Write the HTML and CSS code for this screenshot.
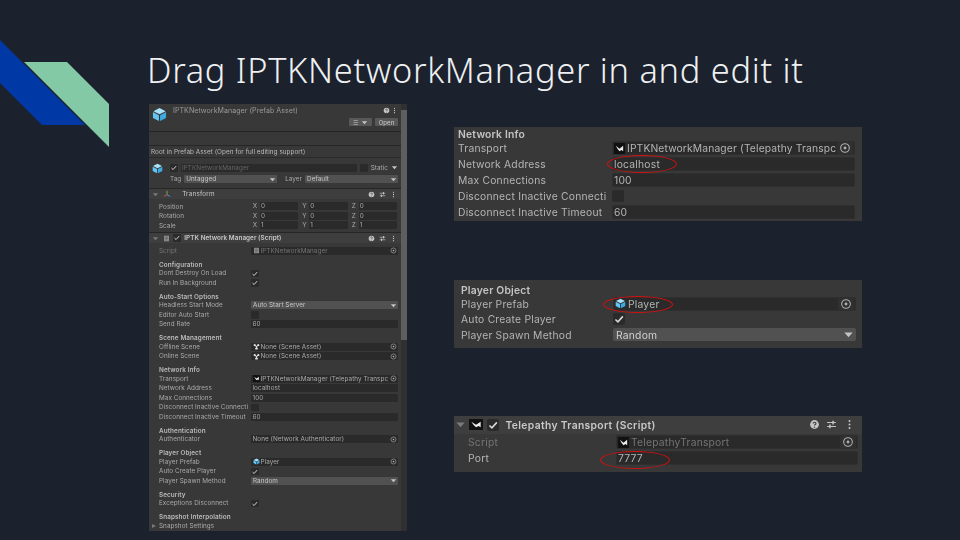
FILE: index.html
```html
<!DOCTYPE html>
<html lang="en">
<head>
<meta charset="utf-8">
<title>Drag IPTKNetworkManager in and edit it</title>
<link rel="stylesheet" href="styles.css">
</head>
<body>
<svg class="defs" width="0" height="0" aria-hidden="true">
  <defs>
    <symbol id="cube" viewBox="0 0 16 16">
      <path d="M8 1 14.5 4.4 8 7.8 1.5 4.4Z" fill="#a8e2fb"/>
      <path d="M1 5.4 7.4 8.8V15L1 11.7Z" fill="#62c5f2"/>
      <path d="M15 5.4 8.6 8.8V15L15 11.7Z" fill="#3fa9e0"/>
    </symbol>
    <symbol id="check" viewBox="0 0 10 10">
      <path d="M2 5.4 4.1 7.4 8.2 2.8" fill="none" stroke="#d8d8d8" stroke-width="1.3"/>
    </symbol>
    <symbol id="target" viewBox="0 0 10 10">
      <circle cx="5" cy="5" r="3.6" fill="none" stroke="#b0b0b0" stroke-width=".9"/>
      <circle cx="5" cy="5" r="1.2" fill="#b0b0b0"/>
    </symbol>
    <symbol id="help" viewBox="0 0 10 10">
      <circle cx="5" cy="5" r="4" fill="#c4c4c4"/>
      <path d="M3.7 4.1C3.8 2.6 6.4 2.7 6.3 4.1 6.3 5 5 5 5 6" fill="none" stroke="#383838" stroke-width="1"/>
      <circle cx="5" cy="7.4" r=".6" fill="#383838"/>
    </symbol>
    <symbol id="sliders" viewBox="0 0 10 10">
      <path d="M1 3.2H9M1 6.8H9" stroke="#c4c4c4"/>
      <path d="M6.4 1.5V4.9M3.6 5.1V8.5" stroke="#c4c4c4" stroke-width="1.4"/>
    </symbol>
    <symbol id="dots" viewBox="0 0 10 10">
      <circle cx="5" cy="1.8" r=".9" fill="#c4c4c4"/>
      <circle cx="5" cy="5" r=".9" fill="#c4c4c4"/>
      <circle cx="5" cy="8.2" r=".9" fill="#c4c4c4"/>
    </symbol>
    <symbol id="mirror" viewBox="0 0 12 12" preserveAspectRatio="none">
      <rect width="12" height="12" fill="#111"/>
      <path d="M2 3 6 6.2 10 3V9L8.2 7.6 6 9 3.8 6.2Z" fill="#eee"/>
    </symbol>
    <symbol id="scene" viewBox="0 0 10 10">
      <path d="M5 5 .8 4C.6 2.4 1.6 1 3 .9ZM5 5 9.2 4C9.4 2.4 8.4 1 7 .9ZM5 5 2.6 8.6C3.8 9.6 6.2 9.6 7.4 8.6Z" fill="#ddd"/>
      <circle cx="5" cy="5" r="1.2" fill="#ddd"/>
    </symbol>
    <symbol id="script" viewBox="0 0 10 10">
      <path d="M1.5 1H8.5V9H1.5Z" fill="#8f8f8f"/>
      <path d="M3 3H7M3 5H7M3 7H6" stroke="#444" stroke-width=".7"/>
    </symbol>
    <symbol id="arrow" viewBox="0 0 8 8">
      <path d="M1 2.5H7L4 6Z" fill="#c4c4c4"/>
    </symbol>
  </defs>
</svg>

<main class="slide">
  <svg class="decor" viewBox="0 0 110 148" width="110" height="148" aria-hidden="true">
    <polygon points="0,40 85,125 42,125 0,83" fill="#0039a6"/>
    <polygon points="24,62 67,62 109,104 109,147" fill="#84c9a6"/>
  </svg>

  <h1 class="title">Drag IPTKNetworkManager in and edit it</h1>

  <div class="content">
    <section class="inspector">
      <div class="insp-main">
        <div class="asset-head">
          <svg class="asset-cube"><use href="#cube"/></svg>
          <div class="asset-body">
            <div class="asset-title">
              <span class="grow">IPTKNetworkManager (Prefab Asset)</span>
              <svg class="ic"><use href="#help"/></svg>
              <svg class="ic"><use href="#dots"/></svg>
            </div>
            <div class="asset-tools">
              <span class="mini-btn">☰ <svg class="ic"><use href="#arrow"/></svg></span>
              <span class="mini-btn">Open</span>
            </div>
          </div>
        </div>
        <div class="empty-band"></div>
        <div class="root-note">Root in Prefab Asset (Open for full editing support)</div>

        <div class="object">
          <svg class="obj-cube"><use href="#cube"/></svg>
          <div class="obj-body">
            <div class="obj-row">
              <span class="box on"><svg><use href="#check"/></svg></span>
              <span class="field grow dim">IPTKNetworkManager</span>
              <span class="box"></span>
              <span>Static</span>
              <svg class="ic"><use href="#arrow"/></svg>
            </div>
            <div class="obj-row">
              <span>Tag</span>
              <span class="drop grow">Untagged<svg class="ic"><use href="#arrow"/></svg></span>
              <span class="layer">Layer</span>
              <span class="drop grow">Default<svg class="ic"><use href="#arrow"/></svg></span>
            </div>
          </div>
        </div>

        <div class="comp-head">
          <svg class="ic fold"><use href="#arrow"/></svg>
          <svg class="ic gizmo" viewBox="0 0 10 10"><path d="M5 1V6" stroke="#6fb33f" stroke-width="1.2"/><path d="M5 6 9 8" stroke="#4a8be0" stroke-width="1.2"/><path d="M5 6 1 8" stroke="#e05040" stroke-width="1.2"/></svg>
          <span class="comp-name plain">Transform</span>
          <svg class="ic"><use href="#help"/></svg>
          <svg class="ic"><use href="#sliders"/></svg>
          <svg class="ic"><use href="#dots"/></svg>
        </div>
        <div class="xform">
          <div class="row"><span class="lbl">Position</span><span class="vec"><i>X</i><b>0</b><i>Y</i><b>0</b><i>Z</i><b>0</b></span></div>
          <div class="row"><span class="lbl">Rotation</span><span class="vec"><i>X</i><b>0</b><i>Y</i><b>0</b><i>Z</i><b>0</b></span></div>
          <div class="row"><span class="lbl">Scale</span><span class="vec"><i>X</i><b>1</b><i>Y</i><b>1</b><i>Z</i><b>1</b></span></div>
        </div>

        <div class="comp-head">
          <svg class="ic fold"><use href="#arrow"/></svg>
          <svg class="ic"><use href="#script"/></svg>
          <span class="box on"><svg><use href="#check"/></svg></span>
          <span class="comp-name">IPTK Network Manager (Script)</span>
          <svg class="ic"><use href="#help"/></svg>
          <svg class="ic"><use href="#sliders"/></svg>
          <svg class="ic"><use href="#dots"/></svg>
        </div>
        <div class="props">
          <div class="row dim"><span class="lbl">Script</span><span class="field ref"><svg class="ic"><use href="#script"/></svg><span class="grow">IPTKNetworkManager</span><svg class="ic"><use href="#target"/></svg></span></div>

          <div class="sec">Configuration</div>
          <div class="row"><span class="lbl">Dont Destroy On Load</span><span class="box on"><svg><use href="#check"/></svg></span></div>
          <div class="row"><span class="lbl">Run In Background</span><span class="box on"><svg><use href="#check"/></svg></span></div>

          <div class="sec">Auto-Start Options</div>
          <div class="row"><span class="lbl">Headless Start Mode</span><span class="drop wide">Auto Start Server<svg class="ic"><use href="#arrow"/></svg></span></div>
          <div class="row"><span class="lbl">Editor Auto Start</span><span class="box"></span></div>
          <div class="row"><span class="lbl">Send Rate</span><span class="field wide">60</span></div>

          <div class="sec">Scene Management</div>
          <div class="row"><span class="lbl">Offline Scene</span><span class="field ref"><svg class="ic"><use href="#scene"/></svg><span class="grow">None (Scene Asset)</span><svg class="ic"><use href="#target"/></svg></span></div>
          <div class="row"><span class="lbl">Online Scene</span><span class="field ref"><svg class="ic"><use href="#scene"/></svg><span class="grow">None (Scene Asset)</span><svg class="ic"><use href="#target"/></svg></span></div>

          <div class="sec">Network Info</div>
          <div class="row"><span class="lbl">Transport</span><span class="field ref"><svg class="ic"><use href="#mirror"/></svg><span class="grow clip">IPTKNetworkManager (Telepathy Transpc</span><svg class="ic"><use href="#target"/></svg></span></div>
          <div class="row"><span class="lbl">Network Address</span><span class="field wide">localhost</span></div>
          <div class="row"><span class="lbl">Max Connections</span><span class="field wide">100</span></div>
          <div class="row"><span class="lbl">Disconnect Inactive Connecti</span><span class="box"></span></div>
          <div class="row"><span class="lbl">Disconnect Inactive Timeout</span><span class="field wide">60</span></div>

          <div class="sec">Authentication</div>
          <div class="row"><span class="lbl">Authenticator</span><span class="field ref"><span class="grow">None (Network Authenticator)</span><svg class="ic"><use href="#target"/></svg></span></div>

          <div class="sec">Player Object</div>
          <div class="row"><span class="lbl">Player Prefab</span><span class="field ref"><svg class="ic"><use href="#cube"/></svg><span class="grow">Player</span><svg class="ic"><use href="#target"/></svg></span></div>
          <div class="row"><span class="lbl">Auto Create Player</span><span class="box on"><svg><use href="#check"/></svg></span></div>
          <div class="row"><span class="lbl">Player Spawn Method</span><span class="drop wide">Random<svg class="ic"><use href="#arrow"/></svg></span></div>

          <div class="sec">Security</div>
          <div class="row"><span class="lbl">Exceptions Disconnect</span><span class="box on"><svg><use href="#check"/></svg></span></div>

          <div class="sec">Snapshot Interpolation</div>
          <div class="row settings"><span class="tri"></span><span class="lbl">Snapshot Settings</span></div>
        </div>
      </div>
      <div class="scrollbar"><span class="thumb"></span></div>
    </section>

    <div class="crops">
      <section class="crop crop-net">
        <div class="crop-sec">Network Info</div>
        <div class="crow"><span class="clbl">Transport</span><span class="cfield cref"><svg class="cic"><use href="#mirror"/></svg><span class="grow tight">IPTKNetworkManager (Telepathy Transpc</span><svg class="cic"><use href="#target"/></svg></span></div>
        <div class="crow"><span class="clbl">Network Address</span><span class="cfield">localhost</span></div>
        <div class="crow"><span class="clbl">Max Connections</span><span class="cfield">100</span></div>
        <div class="crow"><span class="clbl">Disconnect Inactive Connecti</span><span class="cbox"></span></div>
        <div class="crow"><span class="clbl">Disconnect Inactive Timeout</span><span class="cfield">60</span></div>
        <span class="ring ring-net"></span>
      </section>

      <section class="crop crop-player">
        <div class="crop-sec">Player Object</div>
        <div class="crow"><span class="clbl">Player Prefab</span><span class="cfield cref"><svg class="cic"><use href="#cube"/></svg><span class="grow">Player</span><svg class="cic"><use href="#target"/></svg></span></div>
        <div class="crow"><span class="clbl">Auto Create Player</span><span class="cbox"><svg><use href="#check"/></svg></span></div>
        <div class="crow"><span class="clbl">Player Spawn Method</span><span class="cdrop">Random<svg class="cic"><use href="#arrow"/></svg></span></div>
        <span class="ring ring-player"></span>
      </section>

      <section class="crop crop-tele">
        <div class="tele-head">
          <svg class="cic tele-fold"><use href="#arrow"/></svg>
          <svg class="tele-ic"><use href="#mirror"/></svg>
          <span class="cbox"><svg><use href="#check"/></svg></span>
          <span class="tele-name">Telepathy Transport (Script)</span>
          <svg class="cic"><use href="#help"/></svg>
          <svg class="cic"><use href="#sliders"/></svg>
          <svg class="cic"><use href="#dots"/></svg>
        </div>
        <div class="crow cdim"><span class="clbl">Script</span><span class="cfield cref"><svg class="cic"><use href="#mirror"/></svg><span class="grow">TelepathyTransport</span><svg class="cic"><use href="#target"/></svg></span></div>
        <div class="crow"><span class="clbl">Port</span><span class="cfield">7777</span></div>
        <span class="ring ring-tele"></span>
      </section>
    </div>
  </div>
</main>
</body>
</html>
```
FILE: styles.css
```css
* { box-sizing: border-box; }
html, body { margin: 0; padding: 0; }
body { width: 960px; height: 540px; overflow: hidden; background: #1b212d; font-family: Inter, "Liberation Sans", sans-serif; }
.defs { position: absolute; }
.slide { position: relative; width: 960px; height: 540px; padding: 50px 0 0 147px; background: #1b212d; overflow: hidden; }
.decor { position: absolute; left: 0; top: 0; }
.title { margin: 0; height: 54px; font: 300 34.4px/40px "Noto Sans", sans-serif; color: #eef0f2; letter-spacing: .7px; white-space: nowrap; }
.content { display: flex; margin-left: 2px; }
.grow { flex: 1; min-width: 0; white-space: nowrap; }
.clip { overflow: hidden; }
.tight { letter-spacing: .14px; }

/* left inspector */
.inspector { display: flex; width: 258px; height: 427px; background: #383838; font-size: 6.35px; color: #aaa; filter: blur(.4px); letter-spacing: .05px; white-space: nowrap; }
.insp-main { flex: 1; min-width: 0; }
.scrollbar { width: 6px; padding-top: 6px; background: #303030; }
.thumb { display: block; width: 6px; height: 230px; background: #5e5e5e; }
.ic { width: 7px; height: 7px; flex: none; }

.asset-head { display: flex; height: 28px; padding: 3px 3px 0 3px; gap: 6px; border-bottom: 1px solid #232323; }
.asset-cube { width: 15px; height: 15px; flex: none; }
.asset-body { flex: 1; }
.asset-title { display: flex; align-items: center; height: 7px; margin-bottom: 4px; gap: 1px; color: #999; font-size: 7.05px; }
.asset-tools { display: flex; justify-content: flex-end; gap: 3px; }
.mini-btn { display: flex; align-items: center; justify-content: center; gap: 2px; width: 23px; height: 8px; background: #585858; border-radius: 1px; color: #ccc; font-size: 6px; }
.empty-band { height: 14px; border-bottom: 1px solid #262626; }
.root-note { height: 12px; line-height: 12px; padding-left: 2px; color: #bbb; border-bottom: 1px solid #2a2a2a; }

.object { display: flex; height: 31px; padding: 4px 3px 0 3px; gap: 7px; border-bottom: 1px solid #262626; }
.obj-cube { width: 11px; height: 11px; margin-top: 1px; flex: none; }
.obj-body { flex: 1; min-width: 0; }
.obj-row { display: flex; align-items: center; height: 11.5px; gap: 3px; }
.obj-row .field { height: 8px; }
.obj-row .layer { margin-left: 5px; }

.comp-head { display: flex; align-items: center; height: 10px; padding: 0 4.5px 0 3px; gap: 3.6px; background: #3e3e3e; color: #c8c8c8; }
.comp-name { flex: 1; font-weight: 600; white-space: nowrap; }
.comp-name.plain { font-weight: 400; margin-left: 8px; letter-spacing: .2px; }
.fold { opacity: .45; }
.gizmo { width: 8px; height: 8px; }

.xform { height: 34px; padding-top: 3px; border-bottom: 1px solid #262626; }
.props { padding-top: 3px; }
.row { display: flex; align-items: center; height: 9.5px; padding: 0 3px 0 10px; }
.row.dim { color: #747474; }
.lbl { width: 92px; flex: none; overflow: hidden; white-space: nowrap; }
.vec { display: grid; grid-template-columns: 8px 1fr 8px 1fr 8px 1fr; gap: 0 1px; flex: 1; height: 9px; align-items: stretch; }
.vec i { font-style: normal; text-align: center; line-height: 9px; }
.vec b { font-weight: 400; background: #2a2a2a; line-height: 8px; padding-left: 1px; border-radius: 1px; margin: 0 1px 1px 0; }
.sec { height: 8px; line-height: 8px; margin: 5px 0 0 10px; font-weight: 600; color: #bbb; letter-spacing: .1px; }
.field { display: flex; align-items: center; height: 8.4px; padding: 0 1.5px; background: #2a2a2a; border-radius: 1px; gap: 1px; overflow: hidden; }
.field.dim { color: #666; }
.wide { flex: 1; }
.ref { flex: 1; min-width: 0; }
.drop { display: flex; align-items: center; justify-content: space-between; height: 8.4px; padding: 0 1px 0 2px; background: #515151; border-radius: 1px; color: #c8c8c8; }
.box { display: block; width: 7.5px; height: 7.5px; flex: none; background: #2a2a2a; border-radius: 1px; }
.box svg { display: block; width: 7.5px; height: 7.5px; }
.settings { padding-left: 3px; }
.tri { width: 0; height: 0; margin-right: 3px; border-left: 4px solid #777; border-top: 2.5px solid transparent; border-bottom: 2.5px solid transparent; }

/* right crops */
.crops { display: flex; flex-direction: column; width: 408px; margin-left: 47px; padding-top: 23px; color: #b4b4b4; font-size: 10.3px; letter-spacing: .22px; white-space: nowrap; }
.crop { position: relative; background: #383838; filter: blur(.3px); }
.crop-net { height: 94px; padding: 2px 7px 0 4px; margin-bottom: 59px; }
.crop-player { height: 68px; padding: 5px 6px 0 7px; margin-bottom: 68px; }
.crop-tele { height: 56px; padding: 0 4px 0 6px; }
.crop-sec { height: 10px; margin: 0 0 1px; line-height: 10px; font-weight: 600; color: #c4c4c4; }
.crow { display: flex; align-items: center; height: 16px; }
.crop-player .crow { height: 15.6px; }
.clbl { width: 154px; flex: none; overflow: hidden; }
.crop-player .clbl { width: 152px; }
.crop-tele .clbl { width: 156px; padding-left: 8px; }
.cfield { display: flex; align-items: center; flex: 1; min-width: 0; height: 14px; gap: 2px; padding: 0 1px; background: #2a2a2a; border: 1px solid #2f2f2f; border-radius: 2px; }
.cref > svg:last-child { width: 16px; height: 12px; background: #303030; }
.cic { width: 11px; height: 11px; flex: none; }
.cbox { display: block; width: 12px; height: 12px; flex: none; background: #2a2a2a; border-radius: 2px; }
.cbox svg { display: block; width: 12px; height: 12px; }
.cdrop { display: flex; align-items: center; justify-content: space-between; flex: 1; height: 13px; padding: 0 2px 0 3px; background: #515151; border-radius: 2px; color: #d0d0d0; }
.cdim { color: #747474; }
.tele-head { display: flex; align-items: center; height: 18px; gap: 6.5px; padding: 0 7.5px 1px 1px; background: #3e3e3e; margin: 0 -4px 0 -6px; }
.tele-fold { opacity: .45; margin-right: -3.5px; }
.tele-ic { width: 14px; height: 11px; flex: none; margin-right: -2.5px; }
.tele-name { flex: 1; font-weight: 600; color: #c8c8c8; letter-spacing: .35px; }
.ring { position: absolute; border: 1.5px solid #d60f0f; border-radius: 50%; }
.ring-net { left: 153px; top: 28px; width: 70px; height: 18px; }
.ring-player { left: 149px; top: 16px; width: 70px; height: 17px; }
.ring-tele { left: 146px; top: 35px; width: 70px; height: 18px; }
```
